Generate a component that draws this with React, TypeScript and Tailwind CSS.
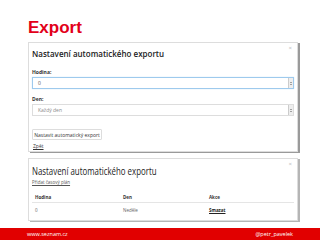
import React from "react";

function Arrow() {
  return (
    <div className="flex h-full w-[5px] flex-col items-center justify-center gap-[1px] border-l border-[#ccc] bg-[#eee]">
      <div className="h-0 w-0 border-x-[1.5px] border-b-[1.5px] border-x-transparent border-b-[#555]" />
      <div className="h-0 w-0 border-x-[1.5px] border-t-[1.5px] border-x-transparent border-t-[#555]" />
    </div>
  );
}

export default function App() {
  return (
    <div
      className="relative flex h-[240px] w-[320px] flex-col overflow-hidden bg-white"
      style={{ fontFamily: '"Open Sans", "Noto Sans", sans-serif' }}
    >
      <div
        className="h-[42px] pl-[28px] pt-[19px] text-[17px] font-bold leading-[17px] text-[#e2001a]"
        style={{ fontFamily: '"Liberation Sans", Arial, sans-serif' }}
      >
        Export
      </div>

      {/* Panel 1 */}
      <div className="relative ml-[28px] h-[110px] w-[270px] border border-[#ddd] bg-white pl-[3px] pr-[4px] shadow-[2px_1px_0_#9a9a9a]">
        <div className="absolute right-[5px] top-[2px] text-[6px] leading-[6px] text-[#bbb]">×</div>
        <div className="mt-[6px] text-[8px] font-semibold leading-[10px] text-[#222]">
          Nastavení automatického exportu
        </div>
        <div className="mt-[10px] text-[5px] font-bold leading-[6px] text-[#333]">Hodina:</div>
        <div className="mt-[2px] flex h-[12px] w-[262px] items-center justify-between border border-[#9ecaed] bg-white pl-[5px] shadow-[0_0_1px_#bfe0f7]">
          <span className="text-[5px] leading-[6px] text-[#555]">0</span>
          <Arrow />
        </div>
        <div className="mt-[7px] text-[5px] font-bold leading-[6px] text-[#333]">Den:</div>
        <div className="mt-[2px] flex h-[12px] w-[262px] items-center justify-between border border-[#ddd] bg-white pl-[5px]">
          <span className="text-[5px] leading-[6px] text-[#888]">Každý den</span>
          <Arrow />
        </div>
        <div className="mt-[13px] flex h-[11px] w-[70px] items-center justify-center rounded-[1px] border border-[#ddd] bg-white text-[5px] leading-[6px] text-[#333]">
          Nastavit automatický export
        </div>
        <div className="mt-[3px] pl-[1px] text-[5px] leading-[6px] text-[#333] underline">Zpět</div>
      </div>

      {/* Panel 2 */}
      <div className="relative ml-[28px] mt-[6px] h-[63px] w-[270px] border border-[#ddd] bg-white pl-[3px] pr-[4px] shadow-[2px_1px_0_#b5b5b5]">
        <div className="absolute right-[5px] top-[2px] text-[6px] leading-[6px] text-[#bbb]">×</div>
        <div className="mt-[6px] origin-left scale-x-[0.75] whitespace-nowrap text-[10.5px] font-medium leading-[12px] text-[#222]">
          Nastavení automatického exportu
        </div>
        <div className="mt-[2px] text-[4.5px] leading-[6px] text-[#555] underline">Přidat časový plán</div>
        <div className="mt-[9px] grid w-[262px] grid-cols-[88px_86px_1fr] border-b border-[#e5e5e5] pb-[2px] pl-[3px] text-[4.5px] font-bold leading-[6px] text-[#333]">
          <span>Hodina</span>
          <span>Den</span>
          <span>Akce</span>
        </div>
        <div className="mt-[4px] grid w-[262px] grid-cols-[88px_86px_1fr] pl-[3px] text-[4.5px] leading-[6px] text-[#666]">
          <span>0</span>
          <span>Neděle</span>
          <span className="font-bold text-[#222] underline">Smazat</span>
        </div>
      </div>

      <div className="flex-1" />
      <div className="flex h-[12px] items-center justify-between bg-[#e10000] pl-[27px] pr-[27px] text-[5.5px] leading-[6px] text-white">
        <span>www.seznam.cz</span>
        <span>@petr_pavelek</span>
      </div>
    </div>
  );
}
